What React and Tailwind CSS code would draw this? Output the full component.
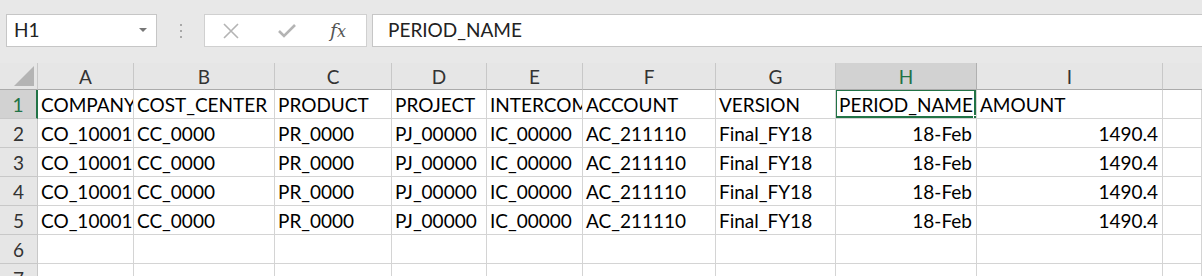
import React from "react";

const cols = ["A", "B", "C", "D", "E", "F", "G", "H", "I", ""];
const header = ["COMPANY", "COST_CENTER", "PRODUCT", "PROJECT", "INTERCOMPANY", "ACCOUNT", "VERSION", "PERIOD_NAME", "AMOUNT", ""];
const dataRow = ["CO_10001", "CC_0000", "PR_0000", "PJ_00000", "IC_00000", "AC_211110", "Final_FY18", "18-Feb", "1490.4", ""];
const rightAligned = [7, 8];

const gridCols = "grid-cols-[38px_96px_141px_117px_95px_96px_133px_120px_141px_186px_1fr]";

function CornerCell() {
  return (
    <div className="relative h-[27px] border-r border-b border-r-[#c8c8c8] border-b-[#ababab] bg-[#e6e6e6]">
      <svg className="absolute right-[3px] bottom-[3px]" width="20" height="20" viewBox="0 0 20 20">
        <polygon points="20,0 20,20 0,20" fill="#b4b4b4" />
      </svg>
    </div>
  );
}

export default function App() {
  const font = { fontFamily: "Lato, 'Open Sans', sans-serif" };
  return (
    <div className="w-[1202px] h-[276px] overflow-hidden bg-white" style={font}>
      {/* formula bar */}
      <div className="h-[63px] bg-[#e8e8e8] flex items-start pt-[14px]">
        <div className="ml-[6px] w-[151px] h-[33px] bg-white border border-[#c6c6c6] flex items-center justify-between pl-[7px] pr-[9px]">
          <span className="text-[19px] text-[#222]">H1</span>
          <svg width="8" height="5" viewBox="0 0 8 5"><polygon points="0,0 8,0 4,4" fill="#777" /></svg>
        </div>
        <div className="w-[47px] h-[33px] flex flex-col items-center justify-center gap-[4px]">
          <div className="w-[2px] h-[2px] bg-[#a8a8a8]" />
          <div className="w-[2px] h-[2px] bg-[#a8a8a8]" />
          <div className="w-[2px] h-[2px] bg-[#a8a8a8]" />
        </div>
        <div className="w-[163px] h-[33px] bg-white border border-[#d0d0d0] flex items-center">
          <svg className="ml-[17px]" width="18" height="18" viewBox="0 0 18 18">
            <path d="M2 2 L16 16 M16 2 L2 16" stroke="#b4b4b4" strokeWidth="1.6" fill="none" />
          </svg>
          <svg className="ml-[37px]" width="20" height="18" viewBox="0 0 20 18">
            <path d="M2 9 L7 14 L18 3" stroke="#b4b4b4" strokeWidth="2.6" fill="none" />
          </svg>
          <span className="ml-[33px] italic text-[#555]" style={{ fontFamily: "'DejaVu Serif', 'Liberation Serif', serif" }}>
            <span className="text-[19px]">f</span><span className="text-[16px]">x</span>
          </span>
        </div>
        <div className="ml-[5px] flex-1 h-[33px] bg-white border border-[#c6c6c6] border-r-0 flex items-center pl-[15px]">
          <span className="text-[19px] text-[#222]">PERIOD_NAME</span>
        </div>
      </div>

      {/* sheet */}
      <div className={`grid ${gridCols}`}>
        <CornerCell />
        {cols.map((c, i) => (
          <div
            key={"h" + i}
            className={`h-[27px] pt-[3px] border-r border-b border-b-[#ababab] flex items-center justify-center text-[19px] ${
              c === "H" ? "bg-[#d2d2d2] text-[#217346] border-r-[#b0b0b0]" : "bg-[#e6e6e6] text-[#333] border-r-[#c8c8c8]"
            } ${i === 9 ? "border-r-0" : ""}`}
          >
            {c}
          </div>
        ))}

        {[1, 2, 3, 4, 5, 6, 7].map((r) => {
          const values = r === 1 ? header : r <= 5 ? dataRow : cols.map(() => "");
          return (
            <React.Fragment key={"r" + r}>
              <div
                className={`h-[29px] pt-[3px] border-b border-b-[#c8c8c8] flex items-center justify-center text-[19px] ${
                  r === 1
                    ? "bg-[#d2d2d2] text-[#217346] border-r-2 border-r-[#217346]"
                    : "bg-[#e6e6e6] text-[#333] border-r border-r-[#c8c8c8]"
                }`}
              >
                {r}
              </div>
              {values.map((v, i) => {
                const selected = r === 1 && i === 7;
                return (
                  <div
                    key={i}
                    className={`relative h-[29px] pt-[3px] border-r border-b border-[#d4d4d4] flex items-center overflow-hidden whitespace-nowrap text-[19px] text-black ${
                      rightAligned.includes(i) && r > 1 ? "justify-end pr-[4px]" : "pl-[3px]"
                    }`}
                  >
                    {v}
                    {selected && (
                      <>
                        <div className="absolute -left-[1px] -top-[1px] w-[calc(100%+1px)] h-[calc(100%+1px)] border-2 border-[#217346] pointer-events-none" />
                        <div className="absolute -right-[4px] -bottom-[4px] w-[7px] h-[7px] bg-[#217346] border border-white" />
                      </>
                    )}
                  </div>
                );
              })}
            </React.Fragment>
          );
        })}
      </div>
    </div>
  );
}
